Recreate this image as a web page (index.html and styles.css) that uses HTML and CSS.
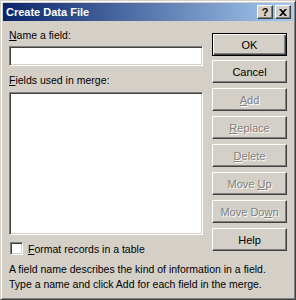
FILE: index.html
```html
<!DOCTYPE html>
<html lang="en">
<head>
    <meta charset="UTF-8">
    <title>Create Data File</title>
    <link rel="stylesheet" href="styles.css">
</head>
<body>

    <div class="window">
        <div class="titlebar">
            <span class="title">Create Data File</span>
            <div class="caption-buttons">
                <span class="caption-btn">?</span>
                <span class="caption-btn close">
                    <svg width="8" height="7" viewBox="0 0 8 7"><path d="M0 0h2l2 2 2-2h2l-3 3.5 3 3.5h-2l-2-2-2 2h-2l3-3.5z" fill="#000"/></svg>
                </span>
            </div>
        </div>

        <div class="dialog">
            <div class="left">
                <div class="label"><u>N</u>ame a field:</div>
                <div class="textbox"></div>
                <div class="label second"><u>F</u>ields used in merge:</div>
                <div class="listbox"></div>
                <div class="check-row">
                    <span class="checkbox"></span>
                    <span><u>F</u>ormat records in a table</span>
                </div>
            </div>

            <div class="buttons">
                <div class="btn default"><span>OK</span></div>
                <div class="btn"><span>Cancel</span></div>
                <div class="btn disabled"><span><u>A</u>dd</span></div>
                <div class="btn disabled"><span><u>R</u>eplace</span></div>
                <div class="btn disabled"><span><u>D</u>elete</span></div>
                <div class="btn disabled"><span>Move <u>U</u>p</span></div>
                <div class="btn disabled"><span>Move Do<u>w</u>n</span></div>
                <div class="btn"><span>Help</span></div>
            </div>
        </div>

        <p class="hint">A field name describes the kind of information in a field.<br>Type a name and click Add for each field in the merge.</p>
    </div>

</body>
</html>
```

FILE: styles.css
```css
body {
    margin: 0;
    padding: 0;
    font-family: "Liberation Sans", Arial, sans-serif;
    font-size: 10.5px;
    color: #000;
    background-color: #d4d0c8;
}

.window {
    box-sizing: border-box;
    width: 296px;
    height: 300px;
    background-color: #d4d0c8;
    border: 1px solid;
    border-color: #d4d0c8 #404040 #404040 #d4d0c8;
    box-shadow: inset 1px 1px 0 #fff, inset -1px -1px 0 #808080;
    padding: 2px;
}

.titlebar {
    height: 18px;
    display: flex;
    align-items: center;
    justify-content: space-between;
    padding: 0 2px 0 3px;
    background: linear-gradient(to right, #0a246a, #a6caf0);
}

.title {
    color: #fff;
    font-weight: bold;
    font-size: 11px;
}

.caption-buttons {
    display: flex;
    gap: 2px;
}

.caption-btn {
    box-sizing: border-box;
    width: 16px;
    height: 14px;
    display: flex;
    align-items: center;
    justify-content: center;
    background-color: #d4d0c8;
    border: 1px solid;
    border-color: #fff #404040 #404040 #fff;
    box-shadow: inset -1px -1px 0 #808080;
    font-weight: bold;
    font-size: 11px;
    line-height: 1;
}

.dialog {
    display: flex;
    gap: 9px;
    padding: 0 3px 0 6px;
}

.left {
    width: 194px;
}

.label {
    height: 13px;
    line-height: 13px;
    margin-top: 8px;
}

.label.second {
    margin-top: 8px;
}

.textbox,
.listbox,
.checkbox {
    box-sizing: border-box;
    background-color: #fff;
    border: 1px solid;
    border-color: #808080 #fff #fff #808080;
    box-shadow: inset 1px 1px 0 #404040, inset -1px -1px 0 #d4d0c8;
}

.textbox {
    height: 20px;
    margin-top: 4px;
}

.listbox {
    height: 143px;
    margin-top: 5px;
}

.check-row {
    display: flex;
    align-items: center;
    gap: 5px;
    margin-top: 7px;
    height: 13px;
    padding-left: 1px;
}

.checkbox {
    width: 13px;
    height: 13px;
}

.buttons {
    display: flex;
    flex-direction: column;
    gap: 5px;
    width: 75px;
    margin-top: 12px;
}

.btn {
    box-sizing: border-box;
    height: 23px;
    display: flex;
    align-items: center;
    justify-content: center;
    font-size: 11px;
    border: 1px solid;
    border-color: #fff #404040 #404040 #fff;
    box-shadow: inset -1px -1px 0 #808080;
}

.btn.default {
    border: 1px solid #000;
    box-shadow: inset 1px 1px 0 #fff, inset -1px -1px 0 #404040, inset -2px -2px 0 #808080;
    margin-bottom: -1px;
}

.btn.disabled {
    color: #808080;
    text-shadow: 1px 1px 0 #fff;
}

.hint {
    margin: 7px 0 0 6px;
    line-height: 15px;
}
```
